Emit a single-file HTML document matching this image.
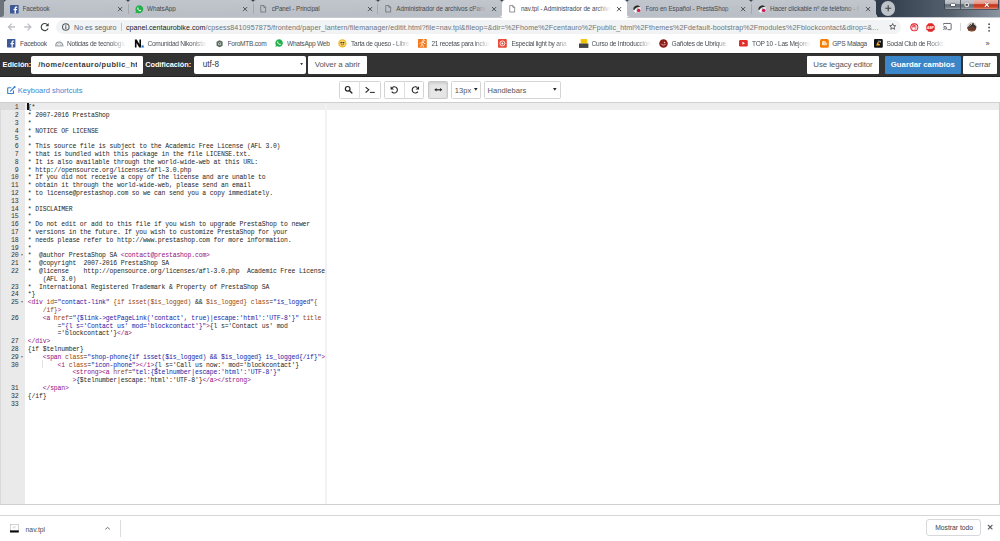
<!DOCTYPE html>
<html><head><meta charset="utf-8"><title>nav.tpl</title>
<style>
*{margin:0;padding:0;box-sizing:border-box}
html,body{width:1000px;height:541px;overflow:hidden;background:#fff;font-family:"Liberation Sans",sans-serif}
.a{position:absolute}
svg{position:absolute;overflow:visible}
#frame{left:0;top:0;width:1000px;height:17.5px;background:linear-gradient(90deg,#27323f 0%,#2a3646 60%,#2f3b4b 88%,#56616e 95%,#8b95a0 100%)}
#lframe{left:0;top:0;width:4.4px;height:16.8px;background:#6d737b;border-bottom-right-radius:3px}
.tab{position:absolute;top:0;height:17.2px;background:linear-gradient(#c1c5cc,#b9bdc5);border-radius:3px 3px 0 0}
.tab.act{background:#fff}
.tt{position:absolute;top:5.5px;font-size:6.3px;line-height:6.3px;letter-spacing:-0.06px;color:#3c4043;white-space:nowrap;overflow:hidden}
.sep{position:absolute;top:4px;width:0.9px;height:9.6px;background:#a3a8ae}
.tbline{left:0;top:16.6px;width:1000px;height:0.9px;background:#c9ccd2}
#toolbar{left:0;top:17.5px;width:1000px;height:35.5px;background:#fff}
#omni{left:56.3px;top:19.7px;width:845px;height:14.2px;background:#f1f3f4;border-radius:7.1px}
.ot{position:absolute;top:24.9px;font-size:7.15px;line-height:7.15px;white-space:nowrap}
.bt{position:absolute;top:40.95px;font-size:6.6px;line-height:6.6px;letter-spacing:-0.26px;color:#4a4e53;white-space:nowrap;overflow:hidden}
.fade{-webkit-mask-image:linear-gradient(90deg,#000 72%,transparent 98%)}
#hdr{left:0;top:53px;width:1000px;height:24.3px;background:#333;border-top:0.8px solid #2a2a2a;border-bottom:1.2px solid #222}
.lbl{position:absolute;top:60.8px;font-size:7.35px;line-height:7.35px;letter-spacing:-0.05px;font-weight:bold;color:#fff;white-space:nowrap}
.inp{position:absolute;top:55.6px;height:18.1px;background:#fff;border-radius:2px;overflow:hidden}
.btn{position:absolute;top:55.6px;height:18.1px;background:#fff;border-radius:1px;font-size:7.9px;letter-spacing:-0.1px;color:#555;white-space:nowrap}
.btn span{position:absolute;left:0;right:0;top:5.1px;line-height:7.9px;text-align:center}
.tb{position:absolute;top:81.2px;height:17.9px;background:#fff;border:0.6px solid #d4d4d4;border-radius:1.5px}
.tb.on{background:#e6e6e6;border-color:#c8c8c8;box-shadow:inset 0 1.5px 2.5px rgba(0,0,0,.12)}
.tbs{position:absolute;top:81.2px;width:0.6px;height:17.9px;background:#e0e0e0}
#editor{left:0;top:102px;width:1000px;height:402.8px;border-top:0.8px solid #d0d0d0;border-bottom:0.8px solid #d0d0d0;border-right:0.8px solid #cfcfcf;background:#fff;overflow:hidden}
#gutter{position:absolute;left:0;top:0;width:25.1px;height:100%;background:#eaeaea;border-left:1.5px solid #dadada}
.gact{position:absolute;left:0;width:24.4px;height:7.8px;background:#dcdcdc}
.actl{position:absolute;left:25.1px;right:0;height:7.8px;background:#ededed}
.pm{position:absolute;left:325.3px;top:0;width:1.3px;height:100%;background:#f2f2f2}
.code{position:absolute;left:27.85px;font-family:"Liberation Mono",monospace;font-size:6.45px;letter-spacing:-0.15px;line-height:7.8px;white-space:pre;color:#262626}
.gn{position:absolute;left:0;width:17.5px;text-align:right;font-family:"Liberation Mono",monospace;font-size:6.6px;letter-spacing:-0.24px;line-height:7.8px;white-space:pre;color:#333}
.fw{position:absolute;left:20px;width:0;height:0;border-left:1.6px solid transparent;border-right:1.6px solid transparent;border-top:2.2px solid #777}
.cur{position:absolute;left:27.4px;width:1.5px;height:7.6px;background:#111}
.ig{position:absolute;left:42.2px;width:0.7px;height:7.6px;background:#e2e2e2}
.tg{color:#930f80}.at{color:#994409}.st{color:#1a1aa6}
#shelf{left:0;top:515px;width:1000px;height:26px;background:#fff;border-top:1px solid #d6d6d6}

</style></head><body>
<div id="frame" class="a"></div>
<div class="a" style="left:0;top:12px;width:6px;height:5.2px;background:#bbbfc7"></div><div id="lframe" class="a"></div>
<div class="a" style="left:490px;top:12px;width:150px;height:6px;background:#fff"></div>
<div class="a" style="left:944.2px;top:0;width:54.8px;height:10.2px;border-radius:0 0 2.5px 2.5px;border:0.7px solid rgba(45,55,68,.8);border-top:none;overflow:hidden;background:linear-gradient(#c3c8cf 0%,#b3b9c0 38%,#656e78 52%,#6f7883 78%,#9ea5ad 100%)">
<div style="position:absolute;left:14.8px;top:0;width:0.7px;height:100%;background:rgba(60,68,78,.8)"></div>
<div style="position:absolute;left:28.4px;top:0;width:0.7px;height:100%;background:rgba(60,68,78,.8)"></div>
<div style="position:absolute;left:29.1px;top:0;width:26px;height:100%;background:linear-gradient(#eab4aa 0%,#e39a8c 38%,#c9371c 52%,#cc4528 78%,#e0907f 100%)"></div>
<div style="position:absolute;left:5.6px;top:4.4px;width:4.6px;height:1.4px;background:#fff;box-shadow:0 0 0.8px 0.4px rgba(40,40,40,.7)"></div>
<svg style="left:18.8px;top:1.5px;width:5.6px;height:5.6px" viewBox="0 0 10 10"><circle cx="5" cy="5" r="3.6" fill="none" stroke="#f4f4f4" stroke-width="1.8"/><circle cx="5" cy="5" r="1.3" fill="#333"/><circle cx="5" cy="5" r="4.6" fill="none" stroke="rgba(40,40,40,.5)" stroke-width=".6"/></svg>
<svg style="left:38.6px;top:1.5px;width:5.6px;height:5.4px" viewBox="0 0 7 6.8"><path d="M1 .8L6 6M6 .8L1 6" stroke="rgba(60,20,10,.6)" stroke-width="2.4"/><path d="M1 .8L6 6M6 .8L1 6" stroke="#fff" stroke-width="1.5"/></svg>
</div>
<div class="a" style="left:876.1px;top:13.6px;width:3.6px;height:3.6px;background:radial-gradient(circle at 100% 0,#2c3848 3.4px,#bbbfc7 3.8px)"></div>
<div class="a" style="left:880.5px;top:1.3px;width:14.4px;height:14.4px;border-radius:50%;background:#bec2c9"></div>
<svg style="left:884.5px;top:5.3px;width:6.4px;height:6.4px" viewBox="0 0 6.4 6.4"><path d="M3.2 0.2V6.2M0.2 3.2H6.2" stroke="#3c4043" stroke-width="1.1"/></svg>
<div class="tab" style="left:4.40px;width:124.00px;"></div>
<div class="tab" style="left:128.40px;width:124.60px;"></div>
<div class="tab" style="left:253.00px;width:124.60px;"></div>
<div class="tab" style="left:377.60px;width:124.60px;border-bottom-right-radius:3px;"></div>
<div class="tab act" style="left:502.20px;width:124.60px;"></div>
<div class="tab" style="left:626.80px;width:124.60px;border-bottom-left-radius:3px;"></div>
<div class="tab" style="left:751.40px;width:124.80px;border-bottom-right-radius:0;"></div>
<div class="a tbline" style="width:502.2px"></div><div class="a tbline" style="left:626.8px;width:373.2px"></div>
<svg style="left:10.2px;top:4.5px;width:8.6px;height:8.6px" viewBox="0 0 16 16"><rect width="16" height="16" rx="1" fill="#3b5998"/><path d="M11 16V10h2l.4-2.4H11V6.2c0-.7.3-1.2 1.2-1.2h1.3V2.9c-.3 0-1-.1-1.9-.1-1.9 0-3.1 1.1-3.1 3.2v1.6H6.6V10h2v6z" fill="#fff"/></svg>
<div class="tt" style="left:22.50px;width:90px;color:#45494e">Facebook<div style="position:absolute;right:0;top:0;width:14px;height:100%;background:linear-gradient(90deg,#bcc0c700,#bcc0c7)"></div></div>
<svg style="left:118.30000000000001px;top:6.6px;width:4.2px;height:4.2px" viewBox="0 0 4.2 4.2"><path d="M0 0L4.2 4.2M4.2 0L0 4.2" stroke="#4f5358" stroke-width="1.0"/></svg>
<svg style="left:135.1px;top:4.5px;width:8.6px;height:8.6px" viewBox="0 0 16 16"><path d="M8 .6a7.3 7.3 0 0 0-6.3 11L.7 15.3l3.8-1A7.3 7.3 0 1 0 8 .6z" fill="#21b04a"/><path d="M5.3 4.2c.3 0 .5 0 .7.5l.6 1.4c.1.2 0 .4-.1.6l-.5.6c.5 1 1.4 1.9 2.5 2.4l.6-.7c.2-.2.4-.2.6-.1l1.4.7c.3.1.3.3.3.5 0 .8-.7 1.4-1.5 1.5-1 .1-2.3-.4-3.6-1.6C5 8.9 4.2 7.5 4.2 6.4c0-1 .6-1.9 1.1-2.2z" fill="#fff"/></svg>
<div class="tt" style="left:147.10px;width:90px;color:#45494e">WhatsApp<div style="position:absolute;right:0;top:0;width:14px;height:100%;background:linear-gradient(90deg,#bcc0c700,#bcc0c7)"></div></div>
<svg style="left:242.9px;top:6.6px;width:4.2px;height:4.2px" viewBox="0 0 4.2 4.2"><path d="M0 0L4.2 4.2M4.2 0L0 4.2" stroke="#4f5358" stroke-width="1.0"/></svg>
<svg style="left:260.1px;top:5.0px;width:6.4px;height:7.6px" viewBox="0 0 14 17"><path d="M1.5 1.2h7l4 4v10.6h-11z M8.5 1.2v4h4" fill="none" stroke="#5f6368" stroke-width="1.5" stroke-linejoin="round"/></svg>
<div class="tt" style="left:271.70px;width:90px;color:#45494e">cPanel - Principal<div style="position:absolute;right:0;top:0;width:14px;height:100%;background:linear-gradient(90deg,#bcc0c700,#bcc0c7)"></div></div>
<svg style="left:367.5px;top:6.6px;width:4.2px;height:4.2px" viewBox="0 0 4.2 4.2"><path d="M0 0L4.2 4.2M4.2 0L0 4.2" stroke="#4f5358" stroke-width="1.0"/></svg>
<svg style="left:384.7px;top:5.0px;width:6.4px;height:7.6px" viewBox="0 0 14 17"><path d="M1.5 1.2h7l4 4v10.6h-11z M8.5 1.2v4h4" fill="none" stroke="#5f6368" stroke-width="1.5" stroke-linejoin="round"/></svg>
<div class="tt" style="left:396.30px;width:90px;color:#45494e">Administrador de archivos cPanel<div style="position:absolute;right:0;top:0;width:14px;height:100%;background:linear-gradient(90deg,#bcc0c700,#bcc0c7)"></div></div>
<svg style="left:492.09999999999997px;top:6.6px;width:4.2px;height:4.2px" viewBox="0 0 4.2 4.2"><path d="M0 0L4.2 4.2M4.2 0L0 4.2" stroke="#4f5358" stroke-width="1.0"/></svg>
<svg style="left:509.3px;top:5.0px;width:6.4px;height:7.6px" viewBox="0 0 14 17"><path d="M1.5 1.2h7l4 4v10.6h-11z M8.5 1.2v4h4" fill="none" stroke="#5f6368" stroke-width="1.5" stroke-linejoin="round"/></svg>
<div class="tt" style="left:520.90px;width:90px;color:#45494e">nav.tpl - Administrador de archivos cPanel<div style="position:absolute;right:0;top:0;width:14px;height:100%;background:linear-gradient(90deg,#ffffff00,#ffffff)"></div></div>
<svg style="left:616.6999999999999px;top:6.6px;width:4.2px;height:4.2px" viewBox="0 0 4.2 4.2"><path d="M0 0L4.2 4.2M4.2 0L0 4.2" stroke="#4f5358" stroke-width="1.0"/></svg>
<svg style="left:632.9px;top:4.6px;width:8px;height:8px" viewBox="0 0 16 16"><circle cx="8" cy="8" r="7.6" fill="#e9eaeb"/><path d="M1 10.5A7.6 7.6 0 0 1 14.6 4.2C11 3 6 4.5 4.5 8.5z" fill="#2b2b2b"/><path d="M3 12c.5-3 2-5.5 5.5-6.5-.5 3-.8 6.5-.3 10C5.6 15.2 4 14 3 12z" fill="#fafafa"/><path d="M8.3 15.5c-.6-3.5-.4-7 .7-10" stroke="#555" stroke-width=".9" fill="none"/><circle cx="11.4" cy="10.8" r="3.4" fill="#d4145a"/><path d="M9.2 6.2l2.2-.9.4 1.8z" fill="#e3b23c"/></svg>
<div class="tt" style="left:645.50px;width:92px;color:#45494e">Foro en Español - PrestaShop<div style="position:absolute;right:0;top:0;width:14px;height:100%;background:linear-gradient(90deg,#bcc0c700,#bcc0c7)"></div></div>
<svg style="left:741.3px;top:6.6px;width:4.2px;height:4.2px" viewBox="0 0 4.2 4.2"><path d="M0 0L4.2 4.2M4.2 0L0 4.2" stroke="#4f5358" stroke-width="1.0"/></svg>
<svg style="left:757.5px;top:4.6px;width:8px;height:8px" viewBox="0 0 16 16"><circle cx="8" cy="8" r="7.6" fill="#e9eaeb"/><path d="M1 10.5A7.6 7.6 0 0 1 14.6 4.2C11 3 6 4.5 4.5 8.5z" fill="#2b2b2b"/><path d="M3 12c.5-3 2-5.5 5.5-6.5-.5 3-.8 6.5-.3 10C5.6 15.2 4 14 3 12z" fill="#fafafa"/><path d="M8.3 15.5c-.6-3.5-.4-7 .7-10" stroke="#555" stroke-width=".9" fill="none"/><circle cx="11.4" cy="10.8" r="3.4" fill="#d4145a"/><path d="M9.2 6.2l2.2-.9.4 1.8z" fill="#e3b23c"/></svg>
<div class="tt" style="left:770.10px;width:90px;color:#45494e">Hacer clickable nº de teléfono - PrestaShop<div style="position:absolute;right:0;top:0;width:14px;height:100%;background:linear-gradient(90deg,#bcc0c700,#bcc0c7)"></div></div>
<svg style="left:865.9px;top:6.6px;width:4.2px;height:4.2px" viewBox="0 0 4.2 4.2"><path d="M0 0L4.2 4.2M4.2 0L0 4.2" stroke="#4f5358" stroke-width="1.0"/></svg>
<div class="sep" style="left:128.00px"></div>
<div class="sep" style="left:252.60px"></div>
<div class="sep" style="left:377.20px"></div>
<div class="sep" style="left:751.00px"></div>
<div id="toolbar" class="a"></div>
<svg style="left:0;top:0;width:60px;height:36px" viewBox="0 0 60 36"><path d="M15 27H8.8M11.8 23.6 8.4 27l3.4 3.4" fill="none" stroke="#bdc0c4" stroke-width="1.3"/><path d="M24.3 27h6.2M27.5 23.6 30.9 27l-3.4 3.4" fill="none" stroke="#bdc0c4" stroke-width="1.3"/><path d="M47.6 24.9A3.55 3.55 0 1 0 48.1 28.4" fill="none" stroke="#3c4043" stroke-width="1.15"/><path d="M48.7 22.9v3.3h-3.3z" fill="#3c4043"/></svg>
<div id="omni" class="a"></div>
<svg style="left:0;top:0;width:80px;height:36px" viewBox="0 0 80 36"><circle cx="65.8" cy="27" r="3.3" fill="none" stroke="#55595e" stroke-width="1.05"/><path d="M65.8 26.2v2.7M65.8 24.8v0.9" stroke="#55595e" stroke-width="1.1"/></svg>
<div class="ot" style="left:74px;color:#5f6368">No es seguro</div>
<div class="a" style="left:120.7px;top:23px;width:0.9px;height:8px;background:#c2c5c9"></div>
<div class="ot" style="left:126px;width:753px;overflow:hidden;color:#70757a;letter-spacing:0.1px"><span style="color:#202124;letter-spacing:0">cpanel.centaurobike.com</span>/cpsess8410957875/frontend/paper_lantern/filemanager/editit.html?file=nav.tpl&amp;fileop=&amp;dir=%2Fhome%2Fcentauro%2Fpublic_html%2Fthemes%2Fdefault-bootstrap%2Fmodules%2Fblockcontact&amp;dirop=&amp;...</div>
<svg style="left:888.6px;top:23.3px;width:7.4px;height:7.2px" viewBox="0 0 16 16"><path d="M8 1.3l1.9 4.4 4.8.4-3.6 3.2 1.1 4.7L8 11.5 3.8 14l1.1-4.7L1.3 6.1l4.8-.4z" fill="none" stroke="#3c4043" stroke-width="1.75" stroke-linejoin="round"/></svg>
<svg style="left:909.8px;top:22.7px;width:8.6px;height:8.6px" viewBox="0 0 16 16"><circle cx="8" cy="8" r="7.4" fill="#e3101e"/><circle cx="8" cy="8" r="5.9" fill="#f6d5d7"/><path d="M4.2 8.8V5.4c0-.9 1.3-.9 1.3 0v2.4h.2V3.6c0-.9 1.3-.9 1.3 0v4.2h.2V3.3c0-.9 1.3-.9 1.3 0v4.5h.2V4.3c0-.9 1.3-.9 1.3 0v5.4c0 2.3-1.3 3.9-3.3 3.9-1.7 0-2.9-1.2-3.3-2.9z" fill="#fff" stroke="#e3101e" stroke-width=".8"/></svg>
<svg style="left:926.2px;top:22.6px;width:9px;height:9px" viewBox="0 0 16 16"><path d="M4.7.5h6.6l4.2 4.2v6.6l-4.2 4.2H4.7L.5 11.3V4.7z" fill="#e3262b"/><text x="8" y="10.3" font-family="Liberation Sans" font-weight="bold" font-size="6" fill="#fff" text-anchor="middle">ABP</text></svg>
<svg style="left:943.3px;top:23.4px;width:8.6px;height:7.2px" viewBox="0 0 17 14"><path d="M1 3V1.5C1 1 1.4.8 1.8.8h13.4c.5 0 .9.3.9.8v10.8c0 .5-.4.8-.9.8H9.5" fill="none" stroke="#50545a" stroke-width="1.7"/><path d="M1 6a7 7 0 0 1 7 7M1 9a4 4 0 0 1 4 4" fill="none" stroke="#50545a" stroke-width="1.7"/><circle cx="1.7" cy="12.3" r="1.2" fill="#50545a"/></svg>
<div class="a" style="left:960px;top:22.8px;width:0.6px;height:8.6px;background:#d5d7da"></div>
<svg style="left:967.4px;top:22.4px;width:9.6px;height:9.6px" viewBox="0 0 16 16"><defs><clipPath id="av"><circle cx="8" cy="8" r="8"/></clipPath></defs><g clip-path="url(#av)"><rect width="16" height="16" fill="#d9d4d0"/><path d="M0 9c3-2 5-1 8-3s5 0 8 1v9H0z" fill="#4a3a36"/><path d="M3 8l3-4 2 3 2-5 3 6" stroke="#2a2222" stroke-width="1.6" fill="none"/><path d="M2 10l4 2 3-3 4 3" stroke="#c0392b" stroke-width="1.3" fill="none"/><rect y="13" width="16" height="3" fill="#8b4a2b"/></g></svg>
<svg style="left:987.6px;top:22.6px;width:2.2px;height:9px" viewBox="0 0 2.2 9"><circle cx="1.1" cy="1.2" r="0.9" fill="#45494e"/><circle cx="1.1" cy="4.5" r="0.9" fill="#45494e"/><circle cx="1.1" cy="7.8" r="0.9" fill="#45494e"/></svg>
<svg style="left:7.2px;top:39.3px;width:8.4px;height:8.4px" viewBox="0 0 16 16"><rect width="16" height="16" rx="1" fill="#3b5998"/><path d="M11 16V10h2l.4-2.4H11V6.2c0-.7.3-1.2 1.2-1.2h1.3V2.9c-.3 0-1-.1-1.9-.1-1.9 0-3.1 1.1-3.1 3.2v1.6H6.6V10h2v6z" fill="#fff"/></svg>
<div class="bt" style="left:20px">Facebook</div>
<svg style="left:54.6px;top:40.2px;width:8.6px;height:6.6px" viewBox="0 0 17 13"><path d="M1.5 11a7 7 0 0 1 14 0" fill="none" stroke="#8c9196" stroke-width="2"/><path d="M4.5 11a4 4 0 0 1 8 0" fill="none" stroke="#b0b5ba" stroke-width="1.6"/><rect x="0" y="10.5" width="17" height="2.2" fill="#9ca1a6"/></svg>
<div class="bt fade" style="left:67px;width:60px">Noticias de tecnología</div>
<svg style="left:0;top:0;width:150px;height:52px" viewBox="0 0 150 52"><path d="M134.9 47.6V39.6h1.9l2.6 4.6V39.6h1.6v8h-1.8l-2.7-4.7v4.7z" fill="#0a0a0a"/><rect x="141.5" y="45.4" width="2.2" height="2.2" fill="#1a78d0"/></svg>
<div class="bt fade" style="left:147.4px;width:61px">Comunidad Nikonistas</div>
<svg style="left:215.8px;top:39.8px;width:7.2px;height:7.6px" viewBox="0 0 14 15"><path d="M7 .5l6 3v8l-6 3-6-3v-8z" fill="#5a6a60"/><circle cx="7" cy="7.5" r="3" fill="#d9e0da"/><circle cx="7" cy="7.5" r="1.6" fill="#3e4a42"/></svg>
<div class="bt" style="left:227.6px">ForoMTB.com</div>
<svg style="left:274.6px;top:39.4px;width:8.2px;height:8.2px" viewBox="0 0 16 16"><path d="M8 .6a7.3 7.3 0 0 0-6.3 11L.7 15.3l3.8-1A7.3 7.3 0 1 0 8 .6z" fill="#21b04a"/><path d="M5.3 4.2c.3 0 .5 0 .7.5l.6 1.4c.1.2 0 .4-.1.6l-.5.6c.5 1 1.4 1.9 2.5 2.4l.6-.7c.2-.2.4-.2.6-.1l1.4.7c.3.1.3.3.3.5 0 .8-.7 1.4-1.5 1.5-1 .1-2.3-.4-3.6-1.6C5 8.9 4.2 7.5 4.2 6.4c0-1 .6-1.9 1.1-2.2z" fill="#fff"/></svg>
<div class="bt" style="left:287px">WhatsApp Web</div>
<svg style="left:338.4px;top:39.2px;width:8.8px;height:8.8px" viewBox="0 0 16 16"><circle cx="8" cy="8" r="7.5" fill="#f0b323"/><circle cx="8" cy="8" r="5.5" fill="#f7d66a"/><path d="M4.5 6.5h7M5 9.5c1 1.6 5 1.6 6 0" stroke="#6b4a10" stroke-width="1.3" fill="none"/><circle cx="5.8" cy="6.8" r="1.2" fill="#333"/><circle cx="10.2" cy="6.8" r="1.2" fill="#333"/></svg>
<div class="bt fade" style="left:351px;width:61px">Tarta de queso - Libre</div>
<svg style="left:418.4px;top:39.2px;width:8.8px;height:8.8px" viewBox="0 0 16 16"><rect width="16" height="16" fill="#f47b20"/><path d="M9 2.5a1.5 1.5 0 1 1 0 .1zM6 6l3-1 2 3 2 .5M8 5.5l-1 4 2.5 2V15M7 9.5 5 14M5 7l-2 1" stroke="#fff" stroke-width="1.4" fill="none"/></svg>
<div class="bt fade" style="left:431.4px;width:60px">21 recetas para incluir</div>
<svg style="left:498.4px;top:39.3px;width:8.8px;height:8.8px" viewBox="0 0 16 16"><rect width="16" height="16" rx="1.5" fill="#e94b3c"/><circle cx="8" cy="8" r="4.5" fill="none" stroke="#fff" stroke-width="1.5"/><circle cx="8" cy="8" r="1.8" fill="#fff"/></svg>
<div class="bt fade" style="left:511.4px;width:61px">Especial light by ana</div>
<svg style="left:578.6px;top:39px;width:9.4px;height:9px" viewBox="0 0 17 16"><rect x="3" y="0" width="12" height="8" fill="#f5c400"/><rect x="0" y="8" width="17" height="8" fill="#454545"/></svg>
<div class="bt fade" style="left:591.6px;width:61px">Curso de Introducción</div>
<svg style="left:659px;top:39.2px;width:9px;height:9px" viewBox="0 0 16 16"><circle cx="8" cy="8" r="7.6" fill="#8c1d18"/><path d="M4 8.5c1 3 7 3 8 0" stroke="#f2d0c0" stroke-width="1.4" fill="none"/><circle cx="9.8" cy="6.2" r="1.3" fill="#f2d0c0"/></svg>
<div class="bt fade" style="left:671.6px;width:60px">Gañotes de Ubrique.</div>
<svg style="left:739.4px;top:40.2px;width:8.8px;height:6.6px" viewBox="0 0 16 12"><rect width="16" height="12" rx="2.5" fill="#e52d27"/><path d="M6.3 3.3v5.4L10.8 6z" fill="#fff"/></svg>
<div class="bt fade" style="left:752px;width:60px">TOP 10 - Las Mejores</div>
<svg style="left:819.8px;top:39.2px;width:8.8px;height:8.8px" viewBox="0 0 16 16"><rect width="16" height="16" rx="3" fill="#f57d00"/><path d="M5 4.5h3.5a1.5 1.5 0 0 1 0 3H5M5 7.5h6a1.5 1.5 0 0 1 0 3H5z M5 4.5v6" stroke="#fff" stroke-width="1.6" fill="none" stroke-linejoin="round"/></svg>
<div class="bt" style="left:832.2px">GPS Malaga</div>
<svg style="left:873.8px;top:39.2px;width:8.8px;height:8.8px" viewBox="0 0 16 16"><rect width="16" height="16" rx="2" fill="#141414"/><path d="M4 12l2-6h3l-1 3h3l-1 3z" fill="#f5a623"/><path d="M7 4h5l-1 3" stroke="#fff" stroke-width="1.2" fill="none"/></svg>
<div class="bt fade" style="left:886.4px;width:60px">Social Club de Rockstar</div>
<div class="a" style="left:985.6px;top:39.8px;font-size:7.4px;line-height:7px;color:#3c4043">»</div>
<div id="hdr" class="a"></div>
<div class="lbl" style="left:2.6px">Edición:</div>
<div class="inp" style="left:31.3px;width:111.7px"><div style="position:absolute;left:6.9px;top:5.7px;font-size:7.4px;line-height:7.4px;letter-spacing:0.42px;font-weight:bold;color:#3a3a3a;white-space:nowrap">/home/centauro/public_html/themes/default-bootstrap/modules/blockcontact/nav.tpl</div><div style="position:absolute;right:0;top:0;width:6.2px;height:100%;background:#fff"></div></div>
<div class="lbl" style="left:145.2px">Codificación:</div>
<div class="inp" style="left:194px;width:111.9px"><div style="position:absolute;left:8.7px;top:5.3px;font-size:8.2px;line-height:8.2px;color:#333">utf-8</div></div>
<svg style="left:299.7px;top:63.2px;width:3.2px;height:2.2px" viewBox="0 0 4 3.2"><path d="M0 0h4L2 3.2z" fill="#333"/></svg>
<div class="btn" style="left:308px;width:58.8px"><span>Volver a abrir</span></div>
<div class="btn" style="left:807px;width:72px"><span>Use legacy editor</span></div>
<div class="btn" style="left:885px;width:75.6px;background:#3a86c8;color:#fff;font-weight:bold"><span style="font-size:7.8px;letter-spacing:0;top:5.2px">Guardar cambios</span></div>
<div class="btn" style="left:962.6px;width:34.8px"><span>Cerrar</span></div>
<svg style="left:0;top:80px;width:20px;height:20px" viewBox="0 80 20 20"><path d="M11.3 87.7H8.3Q7.7 87.7 7.7 88.3V92.9Q7.7 93.5 8.3 93.5H12.9Q13.5 93.5 13.5 92.9V90.6" fill="none" stroke="#3a82cc" stroke-width="1.15"/><path d="M10.5 91.1L14.3 87.3" stroke="#3a82cc" stroke-width="1.25" stroke-linecap="round"/><circle cx="14.7" cy="86.9" r="0.95" fill="#2f77c4"/></svg>
<div class="a" style="left:17.8px;top:87.3px;font-size:7.5px;line-height:7.5px;color:#3f87d0;white-space:nowrap">Keyboard shortcuts</div>
<div class="tb" style="left:338.6px;width:42.4px"></div><div class="tbs" style="left:359px"></div>
<div class="tb" style="left:384.2px;width:40.2px"></div><div class="tbs" style="left:404.4px"></div>
<div class="tb on" style="left:427.8px;width:20.4px"></div>
<div class="tb" style="left:451.2px;width:29.6px"></div>
<div class="tb" style="left:484px;width:76.8px"></div>
<svg style="left:0;top:0;width:460px;height:100px" viewBox="0 0 460 100"><circle cx="347.7" cy="88.8" r="2.35" fill="none" stroke="#222" stroke-width="1.15"/><path d="M349.4 90.6l2.5 2.4" stroke="#222" stroke-width="1.35" stroke-linecap="round"/><path d="M365.6 87.1l3.2 2.7-3.2 2.7" fill="none" stroke="#222" stroke-width="1.1"/><path d="M369.9 92.4h4.9" stroke="#222" stroke-width="1"/><path d="M392.2 87.6A3.1 3.1 0 1 1 391.7 91.6" fill="none" stroke="#222" stroke-width="1.1"/><path d="M390.6 86.2v3.4h3.4z" fill="#222"/><path d="M417.4 87.6A3.1 3.1 0 1 0 417.9 91.6" fill="none" stroke="#222" stroke-width="1.1"/><path d="M419 86.2v3.4h-3.4z" fill="#222"/><path d="M436 89.8h4.6" stroke="#222" stroke-width="1.2"/><path d="M434.3 89.8l2.2-1.8v3.6zM442.3 89.8l-2.2-1.8v3.6z" fill="#222"/></svg>
<div class="a" style="left:454.8px;top:87.4px;font-size:7.55px;line-height:7.55px;color:#555">13px</div>
<svg style="left:474.4px;top:87.8px;width:3.6px;height:2.8px" viewBox="0 0 4 3.2"><path d="M0 0h4L2 3.2z" fill="#222"/></svg>
<div class="a" style="left:487.6px;top:87.4px;font-size:7.55px;line-height:7.55px;color:#555">Handlebars</div>
<svg style="left:553.4px;top:87.8px;width:3.6px;height:2.8px" viewBox="0 0 4 3.2"><path d="M0 0h4L2 3.2z" fill="#222"/></svg>
<div id="editor" class="a">
<div id="gutter"><div class="gact" style="top:-0.40px"></div><div class="gn" style="top:1.30px">1
2
3
4
5
6
7
8
9
10
11
12
13
14
15
16
17
18
19
20
21
22

23
24
25

26


27
28
29
30


31
32
33</div><div class="fw" style="top:151.10px"></div><div class="fw" style="top:197.90px"></div><div class="fw" style="top:252.50px"></div></div>
<div class="actl" style="top:-0.40px"></div>
<div class="pm"></div>
<div class="ig" style="top:257.00px"></div>
<div class="cur" style="top:-0.40px"></div>
<div class="code" style="top:1.30px">{*
* 2007-2016 PrestaShop
*
* NOTICE OF LICENSE
*
* This source file is subject to the Academic Free License (AFL 3.0)
* that is bundled with this package in the file LICENSE.txt.
* It is also available through the world-wide-web at this URL:
* http://opensource.org/licenses/afl-3.0.php
* If you did not receive a copy of the license and are unable to
* obtain it through the world-wide-web, please send an email
* to license@prestashop.com so we can send you a copy immediately.
*
* DISCLAIMER
*
* Do not edit or add to this file if you wish to upgrade PrestaShop to newer
* versions in the future. If you wish to customize PrestaShop for your
* needs please refer to http://www.prestashop.com for more information.
*
*  @author PrestaShop SA <span class="tg">&lt;contact@prestashop.com&gt;</span>
*  @copyright  2007-2016 PrestaShop SA
*  @license    http://opensource.org/licenses/afl-3.0.php  Academic Free License
    (AFL 3.0)
*  International Registered Trademark &amp; Property of PrestaShop SA
*}
<span class="tg">&lt;div</span><span class="at"> id</span>=<span class="st">&quot;contact-link&quot;</span><span class="at"> {if isset($is_logged)</span> &amp;&amp; <span class="at">$is_logged}</span><span class="at"> class</span>=<span class="st">&quot;is_logged&quot;</span><span class="at">{</span>
    <span class="at">/if}</span><span class="tg">&gt;</span>
    <span class="tg">&lt;a</span><span class="at"> href</span>=<span class="st">&quot;{$link-&gt;getPageLink(&#x27;contact&#x27;, true)|escape:&#x27;html&#x27;:&#x27;UTF-8&#x27;}&quot;</span><span class="at"> title</span>
        =<span class="st">&quot;{l s=&#x27;Contact us&#x27; mod=&#x27;blockcontact&#x27;}&quot;</span><span class="tg">&gt;</span>{l s=&#x27;Contact us&#x27; mod
        =&#x27;blockcontact&#x27;}<span class="tg">&lt;/a&gt;</span>
<span class="tg">&lt;/div&gt;</span>
{if $telnumber}
    <span class="tg">&lt;span</span><span class="at"> class</span>=<span class="st">&quot;shop-phone{if isset($is_logged) &amp;&amp; $is_logged} is_logged{/if}&quot;</span><span class="tg">&gt;</span>
        <span class="tg">&lt;i</span><span class="at"> class</span>=<span class="st">&quot;icon-phone&quot;</span><span class="tg">&gt;&lt;/i&gt;</span>{l s=&#x27;Call us now:&#x27; mod=&#x27;blockcontact&#x27;}
            <span class="tg">&lt;strong&gt;&lt;a</span><span class="at"> href</span>=<span class="st">&quot;tel:{$telnumber|escape:&#x27;html&#x27;:&#x27;UTF-8&#x27;}&quot;</span>
            <span class="tg">&gt;</span>{$telnumber|escape:&#x27;html&#x27;:&#x27;UTF-8&#x27;}<span class="tg">&lt;/a&gt;&lt;/strong&gt;</span>
    <span class="tg">&lt;/span&gt;</span>
{/if}
</div>
</div>
<div id="shelf" class="a"></div>
<svg style="left:10.2px;top:523.6px;width:8.8px;height:8.6px" viewBox="0 0 17 16"><rect x="0.5" y="0.5" width="16" height="15" fill="#fff" stroke="#aaa" stroke-width="1"/><rect x="0" y="12" width="17" height="4" fill="#0a0a0a"/><path d="M5 5h6M5 7h6" stroke="#bbb" stroke-width="0.8"/></svg>
<div class="a" style="left:25.6px;top:526.6px;font-size:6.8px;line-height:6.8px;color:#4d5156">nav.tpl</div>
<svg style="left:105.3px;top:527.1px;width:5.2px;height:2.6px" viewBox="0 0 5.2 2.6"><path d="M0.3 2.4 2.6 0.4 4.9 2.4" fill="none" stroke="#5f6368" stroke-width="0.9"/></svg>
<div class="a" style="left:119.6px;top:519.6px;width:0.7px;height:17.2px;background:#dadce0"></div>
<div class="a" style="left:926.3px;top:519.2px;width:55px;height:17.2px;border:0.9px solid #d6d8db;border-radius:3px"></div>
<div class="a" style="left:935.2px;top:524.8px;font-size:6.75px;line-height:6.75px;color:#3c4043;white-space:nowrap">Mostrar todo</div>
<svg style="left:988.1999999999999px;top:525.0999999999999px;width:4.4px;height:4.4px" viewBox="0 0 4.4 4.4"><path d="M0 0L4.4 4.4M4.4 0L0 4.4" stroke="#5a5e63" stroke-width="1.1"/></svg>
</body></html>
